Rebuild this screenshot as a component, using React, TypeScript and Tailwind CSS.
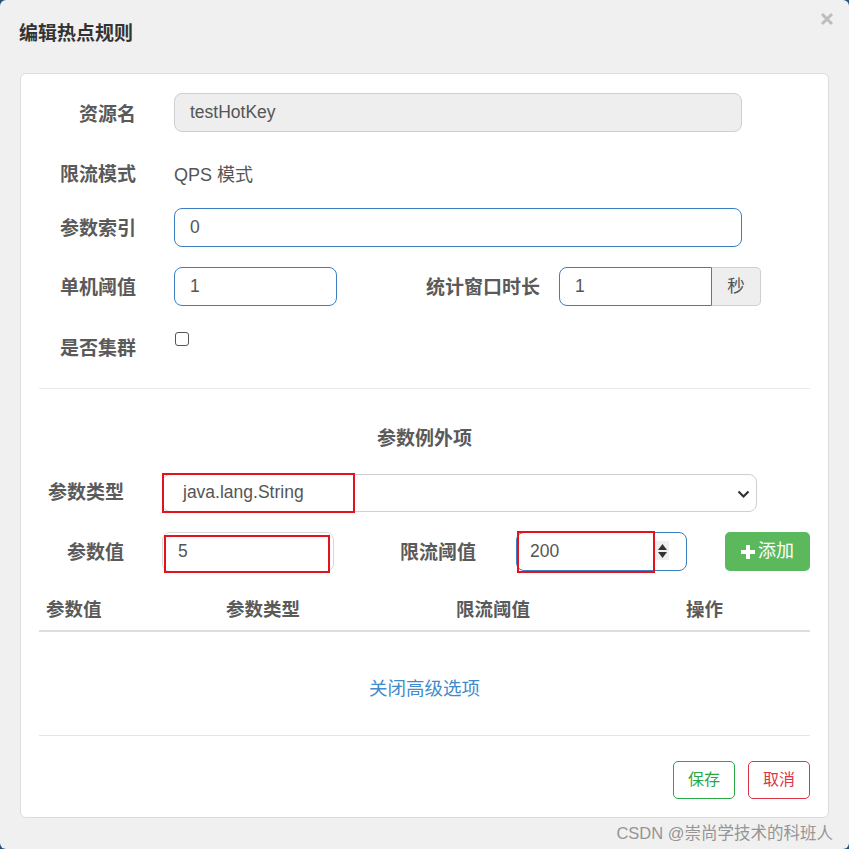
import type { ReactNode } from "react";

const font = "font-['Liberation_Sans','Noto_Sans_CJK_SC',sans-serif]";

function Label({ children, width, className = "" }: { children: ReactNode; width: number; className?: string }) {
  return (
    <div
      className={`shrink-0 text-right text-[19px] font-bold text-[#5a5a5a] ${className}`}
      style={{ width }}
    >
      {children}
    </div>
  );
}

function RedBox({ left, top, width, height }: { left: number; top: number; width: number; height: number }) {
  return (
    <div
      className="pointer-events-none absolute border-2 border-[#e3121d]"
      style={{ left, top, width, height }}
    />
  );
}

export default function App() {
  return (
    <div className={`h-[849px] w-[849px] bg-[#24507d] ${font}`}>
      <div className="flex h-full flex-col rounded-[6px] bg-[#f0f0f0]">
        <div className="relative flex h-[73px] items-start">
          <h1 className="ml-[19px] mt-[20px] text-[19px] font-bold text-[#333]">编辑热点规则</h1>
          <svg className="absolute right-[15px] top-[12px]" width="14" height="14" viewBox="0 0 14 14">
            <path d="M2 2 L12 12 M12 2 L2 12" stroke="#bdbdbd" strokeWidth="3" />
          </svg>
        </div>

        <div className="ml-[20px] flex h-[745px] w-[809px] flex-col rounded-[6px] border border-[#dcdcdc] bg-white px-[18px]">
          {/* 资源名 */}
          <div className="mt-[19px] flex h-[39px] items-center">
            <Label width={97} className="pt-[5px]">资源名</Label>
            <div className="ml-[38px] flex h-[39px] w-[568px] items-center rounded-[8px] border border-[#cfcfcf] bg-[#eeeeee] px-[15px] text-[17.5px] text-[#555]">
              testHotKey
            </div>
          </div>

          {/* 限流模式 */}
          <div className="mt-[24px] flex h-[39px] items-center">
            <Label width={97}>限流模式</Label>
            <div className="ml-[38px] text-[18px] text-[#555]">QPS 模式</div>
          </div>

          {/* 参数索引 */}
          <div className="mt-[13px] flex h-[39px] items-center">
            <Label width={97} className="pt-[4px]">参数索引</Label>
            <div className="ml-[38px] flex h-[39px] w-[568px] items-center rounded-[8px] border border-[#3b7ec2] px-[15px] text-[17.5px] text-[#555]">
              0
            </div>
          </div>

          {/* 单机阈值 / 统计窗口时长 */}
          <div className="mt-[20px] flex h-[39px] items-center">
            <Label width={97} className="pt-[4px]">单机阈值</Label>
            <div className="ml-[38px] flex h-[39px] w-[163px] items-center rounded-[8px] border border-[#3b7ec2] px-[15px] text-[17.5px] text-[#555]">
              1
            </div>
            <Label width={116} className="ml-[87px] pt-[4px]">统计窗口时长</Label>
            <div className="ml-[19px] flex h-[39px]">
              <div className="flex h-full w-[153px] items-center rounded-l-[8px] border border-[#3b7ec2] px-[15px] text-[17.5px] text-[#555]">
                1
              </div>
              <div className="flex h-full w-[49px] items-center justify-center rounded-r-[5px] border border-l-0 border-[#cfcfcf] bg-[#eeeeee] text-[17.5px] text-[#555]">
                秒
              </div>
            </div>
          </div>

          {/* 是否集群 */}
          <div className="mt-[23px] flex h-[40px] items-start">
            <Label width={97} className="pt-[6px]">是否集群</Label>
            <div className="ml-[39px] mt-[3px] h-[14px] w-[14px] rounded-[3px] border border-[#555]" />
          </div>

          <div className="mt-[19px] h-px bg-[#eaeaea]" />

          <div className="mt-[36px] text-center text-[19px] font-bold text-[#5a5a5a]">参数例外项</div>

          {/* 参数类型 */}
          <div className="mt-[20px] flex h-[38px] items-center">
            <Label width={85} className="pt-[2px]">参数类型</Label>
            <div className="relative ml-[38px] flex h-[38px] w-[595px] items-center rounded-[8px] border border-[#cfcfcf] pl-[20px] text-[17.5px] text-[#555]">
              java.lang.String
              <svg className="absolute right-[6px] top-[15px]" width="13" height="9" viewBox="0 0 13 9">
                <path d="M1.5 1.5 L6.5 6.5 L11.5 1.5" fill="none" stroke="#333" strokeWidth="2.2" />
              </svg>
              <RedBox left={-1} top={-2} width={193} height={40} />
            </div>
          </div>

          {/* 参数值 / 限流阈值 */}
          <div className="mt-[20px] flex h-[40px] items-center">
            <Label width={85} className="pt-[4px]">参数值</Label>
            <div className="relative ml-[38px] flex h-[40px] w-[172px] items-center rounded-[8px] border border-[#d8d8d8] pl-[15px] text-[17.5px] text-[#555]">
              5
              <RedBox left={1} top={2} width={166} height={38} />
            </div>
            <Label width={77} className="ml-[65px] pt-[4px]">限流阈值</Label>
            <div className="relative ml-[40px] flex h-[39px] w-[171px] items-center rounded-[8px] border border-[#3b7ec2] pl-[13px] text-[17.5px] text-[#555]">
              200
              <div className="absolute left-[138px] top-[8px] flex h-[19px] w-[14px] flex-col items-center justify-center gap-[2px] bg-[#efefef]">
                <svg width="9" height="6" viewBox="0 0 9 6">
                  <path d="M0 6 L4.5 0 L9 6 Z" fill="#333" />
                </svg>
                <svg width="9" height="6" viewBox="0 0 9 6">
                  <path d="M0 0 L4.5 6 L9 0 Z" fill="#333" />
                </svg>
              </div>
              <RedBox left={0} top={-2} width={138} height={42} />
            </div>
            <button
              type="button"
              className="ml-[38px] flex h-[39px] w-[85px] items-center justify-center gap-[3px] rounded-[5px] bg-[#5cb85c] text-[18px] text-white"
            >
              <svg width="14" height="14" viewBox="0 0 14 14">
                <path d="M5 0 H9 V5 H14 V9 H9 V14 H5 V9 H0 V5 H5 Z" fill="white" />
              </svg>
              添加
            </button>
          </div>

          {/* table header */}
          <div className="mt-[19px] grid h-[39px] grid-cols-[187px_230px_230px_1fr] items-center text-[18.5px] font-bold text-[#5a5a5a]">
            <div className="pl-[7px]">参数值</div>
            <div>参数类型</div>
            <div>限流阈值</div>
            <div>操作</div>
          </div>
          <div className="h-[2px] bg-[#dddddd]" />

          <div className="mt-[43px] text-center text-[18.5px] text-[#428bca]">关闭高级选项</div>

          <div className="mt-[33px] h-px bg-[#e5e5e5]" />

          <div className="mt-[25px] flex justify-end gap-[13px]">
            <button
              type="button"
              className="flex h-[38px] w-[62px] items-center justify-center rounded-[5px] border border-[#28a745] text-[16px] text-[#28a745]"
            >
              保存
            </button>
            <button
              type="button"
              className="flex h-[38px] w-[62px] items-center justify-center rounded-[5px] border border-[#dc3545] text-[16px] text-[#dc3545]"
            >
              取消
            </button>
          </div>
        </div>

        <div className="mr-[16px] mt-[3px] text-right text-[16.5px] text-[#959595]">CSDN @崇尚学技术的科班人</div>
      </div>
    </div>
  );
}
